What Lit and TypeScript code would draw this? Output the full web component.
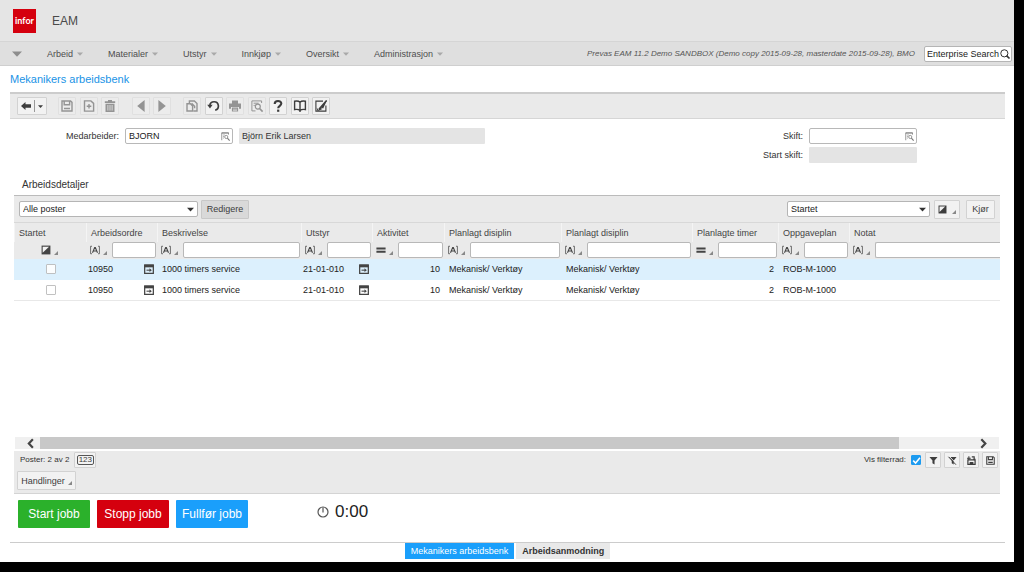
import { LitElement, html, svg, css, nothing } from "lit";
import { customElement, state } from "lit/decorators.js";
import { classMap } from "lit/directives/class-map.js";

const icon = (size: number, body: unknown) =>
  html`<svg class="icon" width=${size} height=${size} viewBox="0 0 12 12" aria-hidden="true">${body}</svg>`;

const glyphs: Record<string, unknown> = {
  save: svg`<path d="M1 1h8.6L11 2.4V11H1z M3.2 1.2v3.6h5.4V1.2 M3 8.5h6" fill="none" stroke="currentColor" stroke-width="1.4"/>`,
  add: svg`<path d="M1.5 .9h6.4L10.6 3.4v7.7H1.5z M6 4v4.6 M3.7 6.3h4.6" fill="none" stroke="currentColor" stroke-width="1.4"/>`,
  trash: svg`<path d="M4 0h4v1.2h3.2v1.8H.8V1.2H4z M1.5 3.8h9V12h-9z" fill="currentColor"/><path d="M3.9 5v5.6M6 5v5.6M8.1 5v5.6" stroke="#eee" stroke-width=".8"/>`,
  prev: svg`<path d="M9.6 0v12L2.2 6z" fill="currentColor"/>`,
  next: svg`<path d="M2.4 0v12l7.4-6z" fill="currentColor"/>`,
  copy: svg`<path d="M3.4 3V1h5L11 3.6V11H7.5 M1 3.8h3.4l2.2 2.2v5H1z M5.6 3.2l3 3v2" fill="none" stroke="currentColor" stroke-width="1.4"/>`,
  undo: svg`<path d="M1.8 5.6A4.3 4.3 0 1 1 7.2 10.2" fill="none" stroke="currentColor" stroke-width="1.7"/><path d="M-.8 4.8h5.4L2 8.4z" fill="currentColor"/>`,
  print: svg`<path d="M3 .6h6v2.8H3z M0 3.6h12v5.2h-2V7H2v1.8H0z M2.9 7.6h6.2v4H2.9z" fill="currentColor"/><path d="M4 9.2h4M4 10.6h4" stroke="#eee" stroke-width=".6"/>`,
  preview: svg`<path d="M10.6 3V.9H.9v10h3.6 M2.6 3.2h5 M2.6 5.4h1.2" fill="none" stroke="currentColor"/><circle cx="6.8" cy="6.6" r="2.5" fill="none" stroke="currentColor" stroke-width="1.2"/><path d="M8.6 8.5l3 3.1" stroke="currentColor" stroke-width="1.6"/>`,
  help: svg`<path d="M2.7 3.9C2.7 0 9.3 0 9.3 3.6 9.3 5.8 6.2 5.8 6.2 8.2" fill="none" stroke="currentColor" stroke-width="2.1"/><path d="M5.1 9.6h2.2v2.2H5.1z" fill="currentColor"/>`,
  book: svg`<path d="M6 2.2C4.8 1 2.4.9.6 1.2v8.4c1.8-.3 4.2-.2 5.4 1 1.2-1.2 3.6-1.3 5.4-1V1.2C9.6.9 7.2 1 6 2.2zM6 2v10" fill="none" stroke="currentColor" stroke-width="1.4"/>`,
  edit: svg`<path d="M8 1.1H.9v10h10V5.4" fill="none" stroke="currentColor" stroke-width="1.1"/><path d="M12.2-.2L8.2 8.4 5.4 7.2z M4.9 7.6l2.6 1.4L3 11z M1.6 7.4l2 2.6L2.4 11z" fill="currentColor"/><path d="M11.6.4L4 9.2" stroke="currentColor" stroke-width="1.6"/>`,
  lookup: svg`<path d="M1 11V1h9v2.5 M1 1.5h9M3 4h2M3 6h1M3 8h1" fill="none" stroke="currentColor"/><circle cx="7" cy="6.6" r="2.1" fill="none" stroke="currentColor"/><path d="M8.5 8.2l3 3.2" stroke="currentColor" stroke-width="1.5"/>`,
  search: svg`<circle cx="5.2" cy="5.2" r="4.3" fill="none" stroke="currentColor" stroke-width="1.2"/><path d="M7.8 8l3.6 3.4" stroke="currentColor" stroke-width="2"/>`,
  half: svg`<path d="M.7.7h10.6v10.6H.7z" fill="currentColor"/><path d="M2 2h7.6L2 9.4z" fill="#f2f2f2"/>`,
  bracket: svg`<path d="M2.4 1.5H.7v9h1.7M9.6 1.5h1.7v9H9.6" fill="none" stroke="currentColor" stroke-width=".9"/><path d="M3 9.2L5.6 3h.8L9 9.2M3.9 7.2h4.2" fill="none" stroke="currentColor" stroke-width="1.3"/>`,
  equals: svg`<path d="M.5 3h11v2.3H.5zM.5 7h11v2.3H.5z" fill="currentColor"/>`,
  link: svg`<path d="M.8 1.2h10.4v9.9H.8z" fill="none" stroke="currentColor" stroke-width="1.5"/><path d="M.4.6h11.2v3.4H.4z" fill="currentColor"/><path d="M3 7.4h4.5" stroke="currentColor" stroke-width="1.3"/><path d="M6.6 5.2v4.4l2.8-2.2z" fill="currentColor"/>`,
  funnel: svg`<path d="M.6 1.2h10.8L7.4 6v5.4L4.6 9.8V6z" fill="currentColor"/>`,
  funnelOff: svg`<path d="M1.6 1.2h9.8L7.6 6v5.4L5 9.8V6z" fill="currentColor"/><path d="M1.4 0l10 10.6" stroke="#f4f4f4" stroke-width="1.2"/><path d="M.6 1l10 10.6" stroke="currentColor" stroke-width="1.3"/>`,
  saveAs: svg`<path d="M1.2 5.2h9.6v6H1.2z" fill="none" stroke="currentColor" stroke-width="1.6"/><path d="M3.5 8h5v3.4h-5zM0 2.2h5v1.4H0zM1.8.4h1.4v5H1.8z" fill="currentColor"/><path d="M6.4 1.2h3.2v3" fill="none" stroke="currentColor" stroke-width="1.5"/><path d="M7.6 3.6h4L9.6 6z" fill="currentColor"/>`,
  clock: svg`<circle cx="6" cy="6" r="5" fill="none" stroke="currentColor" stroke-width="1.2"/><path d="M6 1.6v4.8" stroke="currentColor" stroke-width="1.2"/>`,
  left: svg`<path d="M8.6 1.4L4.2 6l4.4 4.6" fill="none" stroke="currentColor" stroke-width="2.4"/>`,
  right: svg`<path d="M3.6 1.4L8 6l-4.4 4.6" fill="none" stroke="currentColor" stroke-width="2.4"/>`,
  back: svg`<path d="M0 6l5.4-4.8v2.6H12v4.4H5.4v2.6z" fill="currentColor"/>`,
  caret: svg`<path d="M0 3h12L6 9.4z" fill="currentColor"/>`,
  corner: svg`<path d="M12 0v12H0z" fill="currentColor"/>`,
  check: svg`<path d="M1.6 6.2l3.2 3.2 5.8-7" fill="none" stroke="#fff" stroke-width="2"/>`,
};

const MENU = ["Arbeid", "Materialer", "Utstyr", "Innkjøp", "Oversikt", "Administrasjon"];

interface Tool {
  name: string;
  label: string;
  dim?: boolean;
}

const TOOLS: { cls: string; items: Tool[] }[] = [
  {
    cls: "records",
    items: [
      { name: "save", label: "Lagre", dim: true },
      { name: "add", label: "Ny post", dim: true },
      { name: "trash", label: "Slett", dim: true },
    ],
  },
  {
    cls: "paging",
    items: [
      { name: "prev", label: "Forrige", dim: true },
      { name: "next", label: "Neste", dim: true },
    ],
  },
  {
    cls: "actions",
    items: [
      { name: "copy", label: "Kopier", dim: true },
      { name: "undo", label: "Tilbakestill" },
      { name: "print", label: "Skriv ut", dim: true },
      { name: "preview", label: "Forhåndsvis", dim: true },
      { name: "help", label: "Hjelp" },
      { name: "book", label: "Dokumentasjon" },
      { name: "edit", label: "Rediger skjerm" },
    ],
  },
];

interface Column {
  key: string;
  label: string;
  filter: "flag" | "text" | "number";
  cls: string;
  link?: boolean;
}

const COLUMNS: Column[] = [
  { key: "started", label: "Startet", filter: "flag", cls: "c-started" },
  { key: "order", label: "Arbeidsordre", filter: "text", cls: "c-order", link: true },
  { key: "description", label: "Beskrivelse", filter: "text", cls: "c-description" },
  { key: "equipment", label: "Utstyr", filter: "text", cls: "c-order", link: true },
  { key: "activity", label: "Aktivitet", filter: "number", cls: "c-activity" },
  { key: "trade", label: "Planlagt disiplin", filter: "text", cls: "c-trade" },
  { key: "tradeText", label: "Planlagt disiplin", filter: "text", cls: "c-trade-text" },
  { key: "hours", label: "Planlagte timer", filter: "number", cls: "c-hours" },
  { key: "plan", label: "Oppgaveplan", filter: "text", cls: "c-order" },
  { key: "note", label: "Notat", filter: "text", cls: "c-note" },
];

const JOB = {
  order: "10950",
  description: "1000 timers service",
  equipment: "21-01-010",
  activity: "10",
  trade: "Mekanisk/ Verktøy",
  tradeText: "Mekanisk/ Verktøy",
  hours: "2",
  plan: "ROB-M-1000",
  note: "",
};
const ROWS: Record<string, string>[] = [JOB, { ...JOB }];

@customElement("app-root")
export class AppRoot extends LitElement {
  @state() private selected = 0;
  @state() private showFilter = true;

  static styles = css`
    :host {
      display: flex;
      box-sizing: border-box;
      min-height: 100vh;
      padding: 0 10px 10px 0;
      background: #000;
      color: #333;
      font: 9px/12px "Liberation Sans", Arial, sans-serif;
    }
    * { box-sizing: border-box; }
    button, input, select {
      margin: 0;
      padding: 0;
      font: inherit;
      color: inherit;
      border: 0;
      border-radius: 0;
      background: none;
      appearance: none;
      outline-offset: -1px;
    }
    .icon { display: block; flex: none; overflow: visible; }
    .spacer { flex: 1; }
    .page { flex: 1; min-width: 0; display: flex; flex-direction: column; background: #fff; }

    .brand { display: flex; align-items: center; height: 41px; padding-left: 13px; gap: 16px; background: #e5e5e5; }
    .logo {
      display: grid; place-items: center; width: 23px; height: 24px;
      background: #d5000e; color: #fff; font: bold 9px/12px Lato, sans-serif;
    }
    .product { font-size: 12px; line-height: 16px; color: #4a4a4a; }
    .nav {
      display: flex; align-items: center; height: 25px; padding: 0 2px 0 12px;
      background: #dfdfdf; border-top: 1px solid #d5d5d5; border-bottom: 1px solid #cfcfcf; color: #4d4d4d;
    }
    .menu { display: flex; gap: 25px; padding-left: 25px; }
    .menu button { display: flex; align-items: center; gap: 4px; }
    .menu .icon { color: #a9a9a9; }
    .nav-toggle { color: #8d8d8d; }
    .session { font-style: italic; font-size: 8px; color: #555; white-space: nowrap; }
    .search {
      display: flex; align-items: center; width: 88px; height: 16px; margin-left: 9px; padding: 0 1px 0 2px;
      background: #fff; border: 1px solid #b5b5b5; border-radius: 2px; color: #333;
    }
    .search input { flex: 1; min-width: 0; }
    .search input::placeholder { color: #222; opacity: 1; }

    .main { flex: 1; display: flex; flex-direction: column; padding: 0 9px 0 10px; }
    h1 { margin: 0; padding: 6px 0; font-size: 11px; line-height: 14px; font-weight: 400; color: #1a93e6; }
    .toolbar {
      display: flex; align-items: center; height: 27px; padding: 0 7px;
      background: #eaeaea; border-top: 2px solid #ccc; border-bottom: 1px solid #d6d6d6;
    }
    .btn {
      display: flex; align-items: center; justify-content: center; height: 18px; min-width: 18px;
      border: 1px solid #d2d2d2; border-radius: 1px; background: #f2f2f2; color: #3d3d3d;
    }
    .btn.dim { border-color: #e0e0e0; background: #ececec; color: #949494; }
    .btn.back { width: 30px; gap: 3px; }
    .rule { width: 1px; height: 12px; background: #999; }
    .group { display: flex; justify-content: space-between; }
    .records { width: 61px; margin-left: 11px; }
    .paging { width: 39px; margin-left: 13px; }
    .actions { width: 147px; margin-left: 12px; }

    .form { display: flex; justify-content: space-between; padding: 9px 88px 0 56px; }
    .field { display: flex; align-items: center; gap: 6px; height: 16px; }
    .side { display: grid; gap: 3px; justify-items: end; }
    .lookup {
      display: flex; align-items: center; width: 108px; height: 16px; padding: 0 2px 0 3px;
      border: 1px solid #b8b8b8; border-radius: 2px; background: #fff;
    }
    .lookup input { flex: 1; min-width: 0; color: #222; }
    .lookup button { color: #777; }
    .readonly { height: 16px; padding: 0 3px; background: #e4e4e4; border-radius: 1px; }
    .readonly.wide { width: 246px; }
    .readonly.short { width: 108px; }

    .panel { flex: 1; display: flex; flex-direction: column; padding: 15px 5px 0 4px; }
    h2 { margin: 0; padding: 0 8px 3px; font-size: 10px; line-height: 14px; font-weight: 400; color: #333; }
    .gridbar {
      display: flex; align-items: center; height: 28px; padding: 0 5px;
      background: #eaeaea; border-top: 1px solid #bbb; border-bottom: 1px solid #d8d8d8;
    }
    .select { display: grid; align-items: center; height: 16px; background: #fff; border: 1px solid #b5b5b5; border-radius: 2px; }
    .select > * { grid-area: 1 / 1; }
    .select select { height: 14px; padding: 0 16px 0 3px; line-height: 12px; color: #222; }
    .select .icon { justify-self: end; margin-right: 3px; pointer-events: none; }
    .select.rows { width: 179px; }
    .select.view { width: 143px; }
    .btn.primary { width: 48px; height: 19px; margin-left: 3px; background: #d9d9d9; border-color: #c8c8c8; }
    .btn.flag { width: 26px; height: 19px; margin-left: 4px; gap: 5px; }
    .btn.run { width: 29px; height: 19px; margin-left: 6px; }
    .corner { width: 4px; height: 4px; align-self: end; margin-bottom: 4px; color: #888; }

    .tablewrap { flex: 1; overflow: hidden; }
    table { width: 100%; border-collapse: separate; border-spacing: 0; table-layout: fixed; }
    .c-started { width: 72px; }
    .c-order { width: 71px; }
    .c-description { width: 144px; }
    .c-activity { width: 72px; }
    .c-trade { width: 117px; }
    .c-trade-text { width: 131px; }
    .c-hours { width: 86px; }
    th, td { padding: 0; text-align: left; font-weight: 400; white-space: nowrap; }
    thead { background: #eaeaea; color: #444; }
    .labels th { height: 19px; padding: 0 0 0 4px; border-left: 1px solid #f4f4f4; }
    .filters td { height: 17px; }
    .filter { display: flex; align-items: center; height: 17px; padding: 0 1px 1px 4px; color: #444; }
    .filter button { display: flex; gap: 3px; width: 22px; }
    .filter .corner { align-self: end; margin: 0; }
    .filter input { flex: 1; min-width: 0; height: 16px; padding: 0 3px; background: #fff; border: 1px solid #b8b8b8; border-radius: 2px; }
    .filter.flagcell { padding-left: 27px; }
    .filter.notecell { padding-right: 0; }
    .filter.notecell input { border-right: 0; border-radius: 2px 0 0 2px; }
    tbody td { height: 21px; padding: 0 4px 0 5px; border-bottom: 1px solid #e8e8e8; color: #222; }
    tbody tr.on td { background: #dcf0fd; border-color: #dcf0fd; }
    td.num { text-align: right; }
    td.box { padding: 0 0 0 32px; }
    td.haslink { padding: 0 3px 0 2px; }
    .linked { display: flex; align-items: center; justify-content: space-between; }
    .linked a { color: #444; }
    .tick { display: block; width: 10px; height: 10px; border: 1px solid #bbb; border-radius: 1px; background: #fff; opacity: .9; }

    .scroll { display: flex; align-items: center; height: 12px; margin: 0 1px; background: #f0f0f0; }
    .scroll button { display: grid; place-items: center; width: 25px; color: #444; }
    .scroll .to-left { padding-left: 6px; }
    .scroll .to-right { padding-right: 6px; }
    .track { flex: 1; height: 12px; }
    .thumb { width: 92%; height: 12px; background: #c8c8c8; }
    .status {
      display: grid; gap: 3px; margin-top: 2px; padding: 1px 2px 3px 3px;
      background: #eaeaea; border-bottom: 1px solid #d4d4d4;
    }
    .line { display: flex; align-items: center; gap: 4px; min-height: 16px; padding-left: 3px; font-size: 8px; }
    .line .btn { width: 16px; min-width: 16px; height: 16px; }
    .line .group { gap: 3px; }
    .line .btn.count { width: 22px; margin-left: 1px; }
    .count span { padding: 0 1px; font-size: 8px; line-height: 8px; border: 1px solid #555; border-radius: 2px; }
    .toggle { display: flex; align-items: center; gap: 5px; }
    .checkbox { display: grid; place-items: center; width: 10px; height: 10px; }
    .checkbox > * { grid-area: 1 / 1; pointer-events: none; }
    .checkbox input { width: 10px; height: 10px; border: 1px solid #999; border-radius: 1px; background: #fff; pointer-events: auto; }
    .checkbox input:checked { background: #1d9bf0; border-color: #1d9bf0; }
    .btn.menu-btn { justify-self: start; width: 59px; height: 19px; gap: 3px; }

    .jobs { display: flex; align-items: start; padding: 6px 4px 14px; gap: 7px; }
    .job { width: 72px; height: 28px; font-size: 12px; line-height: 14px; color: #fff; border-radius: 1px; }
    .start { background: #2bb12b; }
    .stop { background: #d5000e; }
    .finish { background: #1a9ffb; }
    .timer { display: flex; align-items: center; gap: 6px; margin-left: 62px; font-size: 17px; line-height: 24px; color: #222; }
    .timer .icon { color: #555; }
    .tabs { display: flex; justify-content: center; gap: 2px; padding-bottom: 3px; border-top: 1px solid #ccc; }
    .tab { height: 16px; padding: 0 6px; background: #e9e9e9; font-weight: 700; }
    .tab.on { background: #1a9ffb; color: #fff; font-weight: 400; }
  `;

  private filterCell(c: Column) {
    const glyph = c.filter === "flag" ? "half" : c.filter === "text" ? "bracket" : "equals";
    return html`<td>
      <div class=${classMap({ filter: true, flagcell: c.filter === "flag", notecell: c.key === "note" })}>
        <button aria-label=${`Operator ${c.label}`}>${icon(10, glyphs[glyph])}<span class="corner">${icon(4, glyphs.corner)}</span></button>
        ${c.filter === "flag" ? nothing : html`<input type="text" aria-label=${`Filter ${c.label}`} />`}
      </div>
    </td>`;
  }

  private bodyCell(c: Column, row: Record<string, string>) {
    if (c.key === "started") return html`<td class="box"><input class="tick" type="checkbox" aria-label="Startet" /></td>`;
    if (c.link)
      return html`<td class="haslink">
        <div class="linked"><span>${row[c.key]}</span><a href="#" aria-label=${`Åpne ${c.label}`}>${icon(10, glyphs.link)}</a></div>
      </td>`;
    return html`<td class=${classMap({ num: c.filter === "number" })}>${row[c.key]}</td>`;
  }

  render() {
    return html`<div class="page">
      <header>
        <div class="brand"><span class="logo">infor</span><span class="product">EAM</span></div>
        <nav class="nav">
          <button class="nav-toggle" aria-label="Vis meny">${icon(10, glyphs.caret)}</button>
          <div class="menu">${MENU.map((m) => html`<button>${m}${icon(6, glyphs.caret)}</button>`)}</div>
          <span class="spacer"></span>
          <span class="session">Prevas EAM 11.2 Demo SANDBOX (Demo copy 2015-09-28, masterdate 2015-09-28), BMO</span>
          <label class="search"><input type="text" placeholder="Enterprise Search" aria-label="Enterprise Search" />${icon(10, glyphs.search)}</label>
        </nav>
      </header>
      <main class="main">
        <h1>Mekanikers arbeidsbenk</h1>
        <div class="toolbar">
          <button class="btn back" aria-label="Tilbake">${icon(10, glyphs.back)}<span class="rule"></span>${icon(5, glyphs.caret)}</button>
          ${TOOLS.map(
            (g) => html`<div class="group ${g.cls}">
              ${g.items.map((t) => html`<button class=${classMap({ btn: true, dim: !!t.dim })} aria-label=${t.label}>${icon(12, glyphs[t.name])}</button>`)}
            </div>`
          )}
        </div>
        <div class="form">
          <div class="field">
            <label for="employee">Medarbeider:</label>
            <span class="lookup"><input id="employee" type="text" value="BJORN" /><button aria-label="Søk medarbeider">${icon(9, glyphs.lookup)}</button></span>
            <input class="readonly wide" type="text" readonly value="Björn Erik Larsen" aria-label="Navn" />
          </div>
          <div class="side">
            <div class="field">
              <label for="shift">Skift:</label>
              <span class="lookup"><input id="shift" type="text" /><button aria-label="Søk skift">${icon(9, glyphs.lookup)}</button></span>
            </div>
            <div class="field">
              <label for="shift-start">Start skift:</label>
              <input id="shift-start" class="readonly short" type="text" readonly />
            </div>
          </div>
        </div>
        <section class="panel">
          <h2>Arbeidsdetaljer</h2>
          <div class="gridbar">
            <span class="select rows"><select aria-label="Poster"><option>Alle poster</option></select>${icon(7, glyphs.caret)}</span>
            <button class="btn primary">Redigere</button>
            <span class="spacer"></span>
            <span class="select view"><select aria-label="Felt"><option>Startet</option></select>${icon(7, glyphs.caret)}</span>
            <button class="btn flag" aria-label="Operator">${icon(9, glyphs.half)}<span class="corner">${icon(4, glyphs.corner)}</span></button>
            <button class="btn run">Kjør</button>
          </div>
          <div class="tablewrap">
            <table>
              <thead>
                <tr class="labels">${COLUMNS.map((c) => html`<th class=${c.cls} scope="col">${c.label}</th>`)}</tr>
                ${this.showFilter ? html`<tr class="filters">${COLUMNS.map((c) => this.filterCell(c))}</tr>` : nothing}
              </thead>
              <tbody>
                ${ROWS.map(
                  (r, i) => html`<tr class=${classMap({ on: i === this.selected })} @click=${() => (this.selected = i)}>
                    ${COLUMNS.map((c) => this.bodyCell(c, r))}
                  </tr>`
                )}
              </tbody>
            </table>
          </div>
          <div class="scroll">
            <button class="to-left" aria-label="Rull til venstre">${icon(11, glyphs.left)}</button>
            <div class="track"><div class="thumb"></div></div>
            <button class="to-right" aria-label="Rull til høyre">${icon(11, glyphs.right)}</button>
          </div>
          <div class="status">
            <div class="line">
              <span>Poster: 2 av 2</span>
              <button class="btn count"><span>123</span></button>
              <span class="spacer"></span>
              <label class="toggle">Vis filterrad:
                <span class="checkbox">
                  <input type="checkbox" .checked=${this.showFilter} @change=${(e: Event) => (this.showFilter = (e.target as HTMLInputElement).checked)} />
                  ${icon(9, glyphs.check)}
                </span>
              </label>
              <div class="group">
                <button class="btn" aria-label="Filtrer">${icon(9, glyphs.funnel)}</button>
                <button class="btn" aria-label="Fjern filter">${icon(9, glyphs.funnelOff)}</button>
                <button class="btn" aria-label="Lagre som">${icon(9, glyphs.saveAs)}</button>
                <button class="btn" aria-label="Lagre filter">${icon(9, glyphs.save)}</button>
              </div>
            </div>
            <button class="btn menu-btn">Handlinger<span class="corner">${icon(4, glyphs.corner)}</span></button>
          </div>
          <div class="jobs">
            <button class="job start">Start jobb</button>
            <button class="job stop">Stopp jobb</button>
            <button class="job finish">Fullfør jobb</button>
            <span class="timer">${icon(12, glyphs.clock)}0:00</span>
          </div>
        </section>
        <div class="tabs">
          <button class="tab on">Mekanikers arbeidsbenk</button>
          <button class="tab">Arbeidsanmodning</button>
        </div>
      </main>
    </div>`;
  }
}
